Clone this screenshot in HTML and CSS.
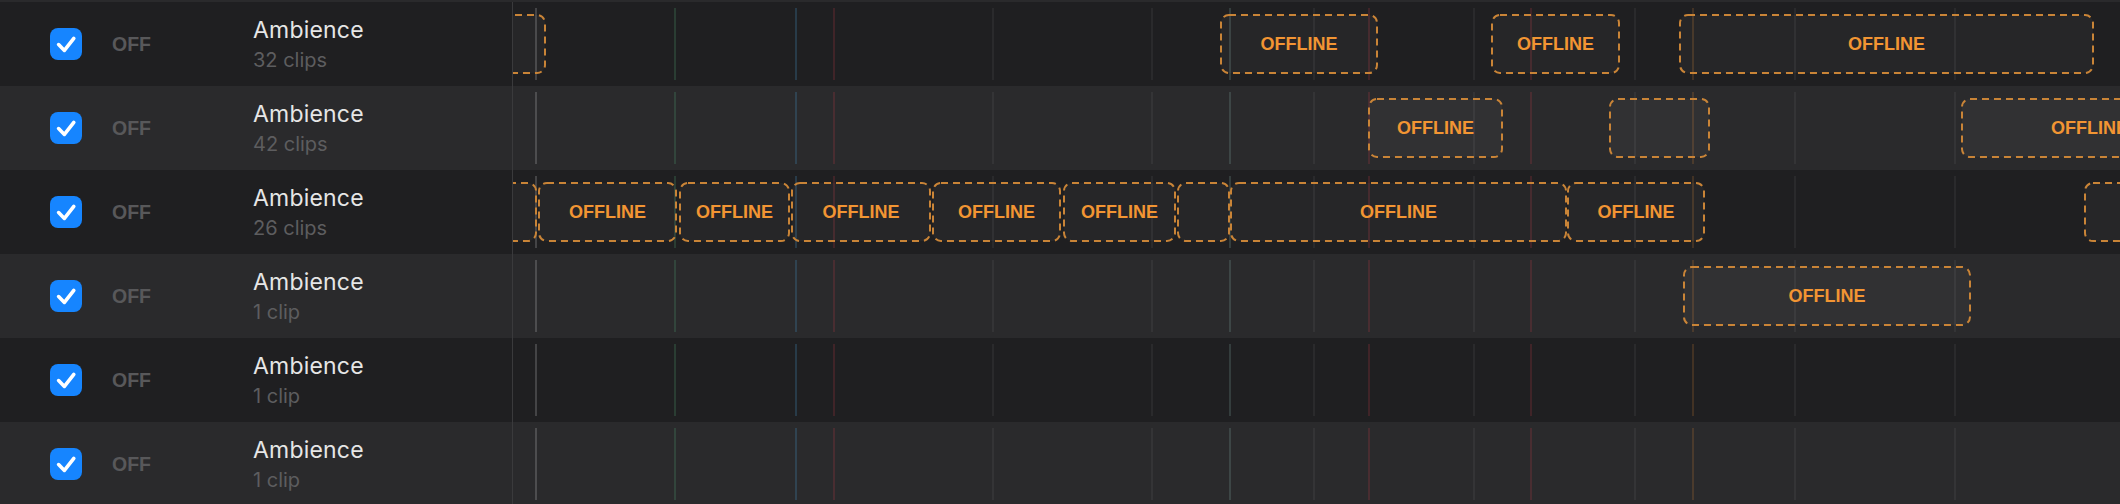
FILE: index.html
```html
<!DOCTYPE html>
<html lang="en">
    <head>
        <meta charset="UTF-8">
        <meta name="viewport" content="width=device-width, initial-scale=1.0">
        <title>Tracks</title>
        <link rel="stylesheet" href="styles.css">
    </head>
    <body>

        <div class="tracks" id="tracks"></div>

        <script>
        // markers shared by every lane (x from lane start)
        const markers = [
            [22, 'gray'], [161, 'green'], [282, 'blue'], [320, 'red'],
            [479, 'faint'], [638, 'faint'], [716, 'teal'], [800, 'faint'],
            [855, 'red'], [960, 'faint'], [1017, 'red'], [1121, 'faint'],
            [1179, 'amber'], [1281, 'faint'], [1441, 'faint']
        ];

        // each clip is [left, width]
        const tracks = [
            { name: 'Ambience', count: 32, clips: [[-67, 100], [707, 158], [978, 129], [1166, 415]] },
            { name: 'Ambience', count: 42, clips: [[855, 135], [1096, 101], [1448, 257]] },
            { name: 'Ambience', count: 26, clips: [[-73, 97], [25, 139], [166, 111], [278, 140], [419, 129],
                                                   [550, 113], [664, 53], [717, 337], [1054, 138], [1571, 100]] },
            { name: 'Ambience', count: 1, clips: [[1170, 288]] },
            { name: 'Ambience', count: 1, clips: [] },
            { name: 'Ambience', count: 1, clips: [] }
        ];

        const list = document.getElementById('tracks');

        tracks.forEach(function(track) {
            const row = document.createElement('div');
            row.className = 'track';

            const label = track.count === 1 ? '1 clip' : track.count + ' clips';
            row.innerHTML =
                '<div class="track-head">' +
                    '<span class="check"><svg viewBox="0 0 32 32" width="32" height="32">' +
                        '<path d="M8.6 16.6 L14.4 22.4 L23.8 10.4"/></svg></span>' +
                    '<span class="state">OFF</span>' +
                    '<div class="track-title">' +
                        '<div class="track-name">' + track.name + '</div>' +
                        '<div class="track-count">' + label + '</div>' +
                    '</div>' +
                '</div>';

            const lane = document.createElement('div');
            lane.className = 'lane';

            markers.forEach(function(m) {
                const line = document.createElement('span');
                line.className = 'marker marker-' + m[1];
                line.style.left = m[0] + 'px';
                lane.appendChild(line);
            });

            track.clips.forEach(function(c) {
                const clip = document.createElement('div');
                clip.className = 'clip';
                clip.style.left = c[0] + 'px';
                clip.style.width = c[1] + 'px';
                clip.innerHTML = '<svg class="clip-frame"><rect/></svg>';
                // too narrow clips show no label
                if (c[1] >= 105) {
                    clip.innerHTML += '<span class="clip-label">OFFLINE</span>';
                }
                lane.appendChild(clip);
            });

            row.appendChild(lane);
            list.appendChild(row);
        });
        </script>

    </body>
</html>
```

FILE: styles.css
```css
/* track list, dark theme */
body {
    margin: 0;
    background-color: #2a2a2c;
    font-family: Inter, "Liberation Sans", sans-serif;
    overflow: hidden;
}
.tracks {
    padding-top: 2px;
}
.track {
    display: flex;
    height: 84px;
    background-color: #1f1f21;
}
.track:nth-child(even) {
    background-color: #2a2a2c;
}
.track-head {
    flex: none;
    width: 513px;
    box-sizing: border-box;
    border-right: 1px solid #3a3a3c;
    display: flex;
    align-items: center;
    padding-left: 50px;
}
.check {
    width: 32px;
    height: 32px;
    border-radius: 8px;
    background-color: #1685ff;
    margin-right: 30px;
}
.check svg {
    display: block;
}
.check path {
    fill: none;
    stroke: #fff;
    stroke-width: 3.6;
    stroke-linecap: round;
    stroke-linejoin: round;
}
.state {
    width: 141px;
    font-family: "Liberation Sans", sans-serif;
    font-weight: bold;
    font-size: 19.5px;
    color: #58585a;
}
.track-name {
    font-size: 23px;
    line-height: 30px;
    letter-spacing: 0.2px;
    color: #e6e6e6;
}
.track-count {
    margin-top: 2px;
    font-size: 20px;
    line-height: 26px;
    color: #5d5d5f;
}

/* timeline lane */
.lane {
    flex: 1;
    position: relative;
    overflow: hidden;
}
.marker {
    position: absolute;
    top: 6px;
    bottom: 6px;
    width: 2px;
    background-color: rgba(255, 255, 255, 0.05);
}
.marker-gray {
    background-color: rgba(255, 255, 255, 0.17);
}
.marker-green {
    background-color: rgba(80, 170, 120, 0.22);
}
.marker-blue {
    background-color: rgba(70, 150, 200, 0.24);
}
.marker-red {
    background-color: rgba(200, 60, 70, 0.2);
}
.marker-teal {
    background-color: rgba(150, 200, 190, 0.18);
}
.marker-amber {
    background-color: rgba(210, 130, 50, 0.2);
}

.clip {
    position: absolute;
    top: 12px;
    height: 60px;
    display: flex;
    align-items: center;
    justify-content: center;
}
.clip-frame {
    position: absolute;
    left: 0;
    top: 0;
    width: 100%;
    height: 100%;
}
.clip-frame rect {
    x: 1px;
    y: 1px;
    width: calc(100% - 2px);
    height: calc(100% - 2px);
    rx: 8px;
    fill: rgba(255, 255, 255, 0.035);
    stroke: #c98437;
    stroke-width: 2;
    stroke-dasharray: 7 5;
}
.clip-label {
    position: relative;
    font-family: "Liberation Sans", sans-serif;
    font-weight: bold;
    font-size: 18px;
    color: #f29533;
    white-space: nowrap;
}
```
